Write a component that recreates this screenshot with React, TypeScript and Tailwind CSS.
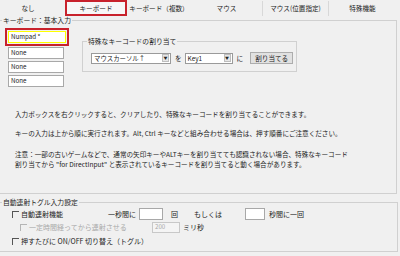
import React from 'react';

const font = { fontFamily: '"Noto Sans CJK JP", "Noto Sans", sans-serif' };

function Check({ disabled }: { disabled?: boolean }) {
  return (
    <span
      className={
        'inline-block w-[7px] h-[7px] border-t border-l shrink-0 ' +
        (disabled ? 'border-[#b5b5b5]' : 'border-[#555]')
      }
    />
  );
}

function Select({ w, label }: { w: string; label: string }) {
  return (
    <div className={'flex items-center h-[11px] bg-white border border-[#9a9a9a] ' + w}>
      <span className="flex-1 pl-[2px] text-[6.4px] leading-[9px] whitespace-nowrap">{label}</span>
      <span className="w-[7px] h-[8px] mr-[1px] bg-[#e6e6e6] border border-[#bdbdbd] flex items-center justify-center text-[4px] leading-none">▼</span>
    </div>
  );
}

function Box({ children, w, className = '' }: { children?: React.ReactNode; w: string; className?: string }) {
  return (
    <div className={'h-[12px] bg-white border border-[#a8a8a8] flex items-center pl-[2px] text-[6.2px] leading-none ' + w + ' ' + className}>
      {children}
    </div>
  );
}

export default function App() {
  const tabs = [
    { t: 'なし', w: 'w-[56px]' },
    { t: 'キーボード', w: 'w-[62px] ml-[9px]', active: true },
    { t: 'キーボード（複数）', w: 'w-[64px]' },
    { t: 'マウス', w: 'w-[71px]' },
    { t: 'マウス(位置指定)', w: 'w-[66px] border-l border-[#d8d8d8]' },
    { t: '特殊機能', w: 'w-[68px] border-l border-[#d8d8d8]' },
  ];

  return (
    <div className="w-[400px] h-[256px] bg-[#f0f0f0] overflow-hidden text-[#222]" style={font}>
      {/* tabs */}
      <div className="flex h-[17px] items-stretch">
        {tabs.map((tab, i) => (
          <div
            key={i}
            className={
              'flex items-center justify-center text-[6.6px] leading-none shrink-0 ' +
              tab.w +
              (tab.active ? ' border-2 border-[#c8222c] bg-[#f7f7f7] h-[16px]' : ' my-[1px]')
            }
          >
            {tab.t}
          </div>
        ))}
      </div>

      {/* group 1 */}
      <div className="relative mt-[3px] w-[397px] h-[174px] border border-l-0 border-[#d0d0d0]">
        <span className="absolute left-[2px] top-[-5px] bg-[#f0f0f0] px-[1px] text-[6.8px] leading-[9px]">キーボード：基本入力</span>

        <div className="flex pt-[7px]">
          <div className="ml-[5px] flex flex-col">
            <div className="w-[64px] p-[1px] border-2 border-[#c8222c]">
              <Box w="w-[58px]" className="bg-[#ffff00] border-[#ffff00]">Numpad *</Box>
            </div>
            <div className="flex flex-col gap-[2px] ml-[3px] mt-[1px]">
              <Box w="w-[56px]">None</Box>
              <Box w="w-[56px]">None</Box>
              <Box w="w-[56px]">None</Box>
            </div>
          </div>

          <div className="relative ml-[13px] mt-[13px] w-[215px] h-[31px] border border-[#d0d0d0]">
            <span className="absolute left-[4px] top-[-5px] bg-[#f0f0f0] px-[1px] text-[6.8px] leading-[9px]">特殊なキーコードの割り当て</span>
            <div className="flex items-center mt-[10px] ml-[8px]">
              <Select w="w-[80px]" label="マウスカーソル↑" />
              <span className="text-[6.6px] leading-none ml-[4px] mr-[3px]">を</span>
              <Select w="w-[48px]" label="Key1" />
              <span className="text-[6.6px] leading-none ml-[4px] mr-[7px]">に</span>
              <div className="w-[43px] h-[12px] bg-[#e1e1e1] border border-[#adadad] flex items-center justify-center text-[6.6px] leading-none">
                割り当てる
              </div>
            </div>
          </div>
        </div>

        <div className="ml-[15px] mt-[22px] text-[6.6px] leading-[10px] whitespace-nowrap">
          <p>入力ボックスを右クリックすると、クリアしたり、特殊なキーコードを割り当てることができます。</p>
          <p className="mt-[9px]">キーの入力は上から順に実行されます。Alt, Ctrl キーなどと組み合わせる場合は、押す順番にご注意ください。</p>
          <p className="mt-[11px]">注意：一部の古いゲームなどで、通常の矢印キーやALTキーを割り当てても認識されない場合、特殊なキーコード</p>
          <p>割り当てから "for DirectInput" と表示されているキーコードを割り当てると動く場合があります。</p>
        </div>
      </div>

      {/* group 2 */}
      <div className="relative mt-[8px] w-[398px] h-[50px] border border-l-0 border-[#d0d0d0]">
        <span className="absolute left-[2px] top-[-5px] bg-[#f0f0f0] px-[1px] text-[6.8px] leading-[9px]">自動連射トグル入力設定</span>

        <div className="flex flex-col pt-[5px] text-[7px] leading-none">
          <div className="flex items-center h-[12px]">
            <div className="ml-[12px] w-[96px] flex items-center gap-[2px]">
              <Check />
              <span>自動連射機能</span>
            </div>
            <span>一秒間に</span>
            <Box w="w-[24px]" className="ml-[3px]" />
            <span className="ml-[8px]">回</span>
            <span className="ml-[16px]">もしくは</span>
            <Box w="w-[20px]" className="ml-[23px]" />
            <span className="ml-[4px]">秒間に一回</span>
          </div>
          <div className="flex items-center h-[11px] mt-[2px]">
            <div className="ml-[20px] w-[132px] flex items-center gap-[2px] text-[#a9a9a9]">
              <Check disabled />
              <span>一定時間経ってから連射させる</span>
            </div>
            <div className="w-[28px] h-[11px] border border-[#c8c8c8] bg-[#f4f4f4] flex items-center pl-[2px] text-[6.2px] text-[#a9a9a9]">200</div>
            <span className="ml-[3px]">ミリ秒</span>
          </div>
          <div className="flex items-center h-[12px] mt-[2px]">
            <div className="ml-[12px] flex items-center gap-[2px]">
              <Check />
              <span>押すたびに ON/OFF 切り替え（トグル）</span>
            </div>
          </div>
        </div>
      </div>
    </div>
  );
}
